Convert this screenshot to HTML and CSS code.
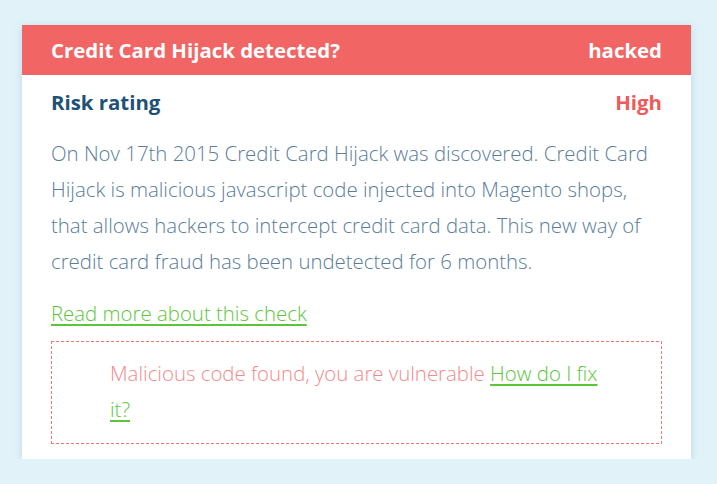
FILE: index.html
```html
<!DOCTYPE html>
<html lang="en">
<head>
  <meta charset="UTF-8">
  <meta name="viewport" content="width=device-width, initial-scale=1.0">
  <title>Credit Card Hijack check</title>
  <link rel="stylesheet" href="styles.css">
</head>
<body>
  <div class="card">
    <div class="card-header">
      <span>Credit Card Hijack detected?</span>
      <span>hacked</span>
    </div>
    <div class="card-body">
      <div class="risk">
        <span class="risk-label">Risk rating</span>
        <span class="risk-value">High</span>
      </div>
      <p class="description">On Nov 17th 2015 Credit Card Hijack was discovered. Credit Card Hijack is malicious javascript code injected into Magento shops, that allows hackers to intercept credit card data. This new way of credit card fraud has been undetected for 6 months.</p>
      <a class="more" href="#">Read more about this check</a>
      <div class="result">
        <p>Malicious code found, you are vulnerable <a href="#">How do I fix it?</a></p>
      </div>
    </div>
  </div>
</body>
</html>
```
FILE: styles.css
```css
body {
  margin: 0;
  font-family: "Open Sans", sans-serif;
  background-color: #e1f3f9;
}

.card {
  width: 669px;
  margin: 25px 0 0 22px;
  background-color: #fff;
  box-shadow: 0 2px 8px rgba(120, 170, 195, 0.35);
}

.card-header {
  display: flex;
  justify-content: space-between;
  align-items: center;
  height: 50px;
  padding: 0 29px;
  background-color: #f26565;
  color: #fff;
  font-size: 20.4px;
  font-weight: 700;
}

.card-body {
  padding: 14px 29px 15px;
}

.risk {
  display: flex;
  justify-content: space-between;
  line-height: 26px;
  font-size: 20.4px;
  font-weight: 700;
}

.risk-label {
  color: #1d5177;
}

.risk-value {
  color: #ef5a5a;
}

.description {
  margin: 20px 0 0;
  font-size: 20.4px;
  font-weight: 300;
  line-height: 36px;
  color: #5a7d9a;
}

.more {
  display: block;
  margin-top: 21px;
  width: max-content;
  font-size: 20.4px;
  font-weight: 300;
  line-height: 26px;
  color: #5cc63b;
  text-decoration-thickness: 2px;
  text-underline-offset: 3px;
}

/* dashed frame drawn with gradients so the dashes stay short and red */
.result {
  margin-top: 15px;
  padding: 14px 59px 17px;
  background:
    repeating-linear-gradient(90deg, #f47474 0 3px, transparent 3px 5px) top / 100% 1px no-repeat,
    repeating-linear-gradient(90deg, #f47474 0 3px, transparent 3px 5px) bottom / 100% 1px no-repeat,
    repeating-linear-gradient(180deg, #f47474 0 3px, transparent 3px 5px) left / 1px 100% no-repeat,
    repeating-linear-gradient(180deg, #f47474 0 3px, transparent 3px 5px) right / 1px 100% no-repeat;
}

.result p {
  margin: 0;
  font-size: 20.4px;
  font-weight: 300;
  line-height: 36px;
  color: #f28b8b;
}

.result a {
  color: #5cc63b;
  text-decoration-thickness: 2px;
  text-underline-offset: 3px;
}
```
